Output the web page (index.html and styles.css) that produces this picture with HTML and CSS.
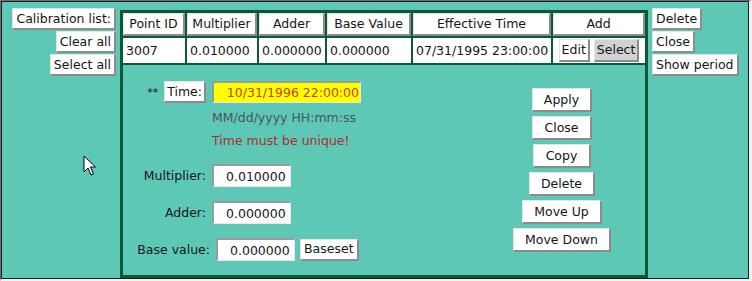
FILE: index.html
```html
<!DOCTYPE html>
<html lang="en">
<head>
    <meta charset="UTF-8">
    <title>Calibration</title>
    <link rel="stylesheet" href="styles.css">
</head>
<body>
    <div class="frame">
        <div class="screen">
            <div class="side side-left">
                <button class="btn">Calibration list:</button>
                <button class="btn">Clear all</button>
                <button class="btn">Select all</button>
            </div>

            <table class="cal-table">
                <tr class="head-row">
                    <td class="c1"><button class="btn btn-head">Point ID</button></td>
                    <td class="c2"><button class="btn btn-head">Multiplier</button></td>
                    <td class="c3"><button class="btn btn-head">Adder</button></td>
                    <td class="c4"><button class="btn btn-head">Base Value</button></td>
                    <td class="c5"><button class="btn btn-head">Effective Time</button></td>
                    <td class="c6"><button class="btn btn-head">Add</button></td>
                </tr>
                <tr class="data-row">
                    <td>3007</td>
                    <td>0.010000</td>
                    <td>0.000000</td>
                    <td>0.000000</td>
                    <td>07/31/1995 23:00:00</td>
                    <td class="row-actions">
                        <button class="btn">Edit</button>
                        <button class="btn btn-selected">Select</button>
                    </td>
                </tr>
                <tr>
                    <td colspan="6" class="edit-cell">
                        <div class="editor">
                            <div class="fields">
                                <div class="field time-row">
                                    <div class="field-label">
                                        <span class="stars">**</span>
                                        <button class="btn">Time:</button>
                                    </div>
                                    <input class="input input-time" type="text" value="10/31/1996 22:00:00">
                                </div>
                                <div class="hint">MM/dd/yyyy HH:mm:ss</div>
                                <div class="error">Time must be unique!</div>
                                <div class="field multiplier-row">
                                    <div class="field-label">Multiplier:</div>
                                    <input class="input" type="text" value="0.010000">
                                </div>
                                <div class="field adder-row">
                                    <div class="field-label">Adder:</div>
                                    <input class="input" type="text" value="0.000000">
                                </div>
                                <div class="field base-row">
                                    <div class="field-label">Base value:</div>
                                    <input class="input" type="text" value="0.000000">
                                    <button class="btn">Baseset</button>
                                </div>
                            </div>
                            <div class="actions">
                                <button class="btn btn-action">Apply</button>
                                <button class="btn btn-action">Close</button>
                                <button class="btn btn-action">Copy</button>
                                <button class="btn btn-action">Delete</button>
                                <button class="btn btn-action">Move Up</button>
                                <button class="btn btn-action">Move Down</button>
                            </div>
                        </div>
                    </td>
                </tr>
            </table>

            <div class="side side-right">
                <button class="btn">Delete</button>
                <button class="btn">Close</button>
                <button class="btn">Show period</button>
            </div>

            <svg class="cursor" width="14" height="22" viewBox="0 0 14 22">
                <path d="M1 1 L1 17 L5 13 L8 20 L10.5 19 L7.5 12 L12.5 12 Z" fill="#fff" stroke="#000" stroke-width="1" stroke-linejoin="round"/>
            </svg>
        </div>
    </div>
</body>
</html>
```

FILE: styles.css
```css
html, body {
    margin: 0;
    padding: 0;
}

body {
    font-family: "DejaVu Sans", sans-serif;
    font-size: 12.5px;
    color: #151515;
}

.frame {
    width: 752px;
    height: 281px;
    box-sizing: border-box;
    border-style: solid;
    border-width: 1px 3px 2px 1px;
    border-color: #6e6e6e #f2f2f2 #f2f2f2 #6e6e6e;
}

.screen {
    position: relative;
    height: 100%;
    box-sizing: border-box;
    border: 1px solid #1c1c1c;
    background: #5ec8b7;
    display: flex;
    align-items: flex-start;
    gap: 4px;
    padding-top: 6px;
}

.side {
    display: flex;
    flex-direction: column;
    gap: 1px;
}

.side-left {
    width: 114px;
    align-items: flex-end;
}

.side-right {
    align-items: flex-start;
}

.btn {
    font-family: "DejaVu Sans", sans-serif;
    font-size: 12.5px;
    color: #151515;
    background: #fff;
    height: 22px;
    padding: 0 2px;
    margin: 0;
    border-style: solid;
    border-width: 1px 2px 2px 1px;
    border-color: #e4e4e4 #8c8c8c #8c8c8c #e4e4e4;
    border-radius: 0;
    line-height: 18px;
    white-space: nowrap;
}

.side .btn {
    padding: 0 3px;
}

/* table */
.cal-table {
    margin-top: 2px;
    width: 528px;
    height: 268px;
    border-collapse: separate;
    border-spacing: 2px;
    border: 1px solid #0b5a35;
    background: #0b5a35;
}

.cal-table td {
    padding: 0;
}

.head-row td {
    background: #f4f4f4;
    height: 23px;
    vertical-align: top;
}

.btn-head {
    width: 100%;
    height: 23px;
}

.c1 { width: 62px; }
.c2 { width: 70px; }
.c3 { width: 66px; }
.c4 { width: 84px; }
.c5 { width: 138px; }
.c6 { width: 92px; }

.data-row td {
    background: #fff;
    height: 25px;
    padding-left: 3px;
    white-space: nowrap;
}

.data-row td.row-actions {
    padding: 0;
    text-align: center;
}

.row-actions .btn {
    height: 23px;
}

.btn-selected {
    background: #d2d2d2;
}

/* editor */
.edit-cell {
    background: #5ec8b7;
    vertical-align: top;
}

.editor {
    display: flex;
}

.fields {
    width: 369px;
    padding-top: 16px;
}

.field {
    display: flex;
    align-items: center;
    gap: 6px;
}

.field-label {
    width: 83px;
    display: flex;
    justify-content: flex-end;
    align-items: center;
    gap: 6px;
    white-space: nowrap;
}

.stars {
    font-size: 11px;
}

.input {
    font-family: "DejaVu Sans", sans-serif;
    font-size: 12.5px;
    color: #151515;
    width: 79px;
    height: 23px;
    box-sizing: border-box;
    padding: 0 0 0 12px;
    margin: 0;
    background: #fff;
    border-style: solid;
    border-width: 2px 1px 1px 2px;
    border-color: #9a9a9a #e8e8e8 #e8e8e8 #9a9a9a;
    outline: none;
}

.input-time {
    width: 149px;
    height: 22px;
    padding: 0 1px 0 0;
    text-align: right;
    background: #ffff00;
    color: #c24000;
}

.hint {
    margin: 7px 0 0 89px;
    line-height: 16px;
    color: #4d5453;
}

.error {
    margin: 7px 0 0 89px;
    line-height: 16px;
    color: #b32c28;
}

.multiplier-row {
    margin-top: 15px;
}

.adder-row {
    margin-top: 14px;
}

.base-row {
    margin-top: 14px;
}

.base-row .field-label {
    width: 87px;
}

.base-row .btn {
    margin-left: -1px;
    padding: 0 3px;
}

.actions {
    width: 140px;
    padding-top: 23px;
    display: flex;
    flex-direction: column;
    align-items: center;
    gap: 4px;
}

.btn-action {
    height: 24px;
    padding: 0 11px;
    min-width: 58px;
}

.cursor {
    position: absolute;
    left: 81px;
    top: 153px;
}
```
